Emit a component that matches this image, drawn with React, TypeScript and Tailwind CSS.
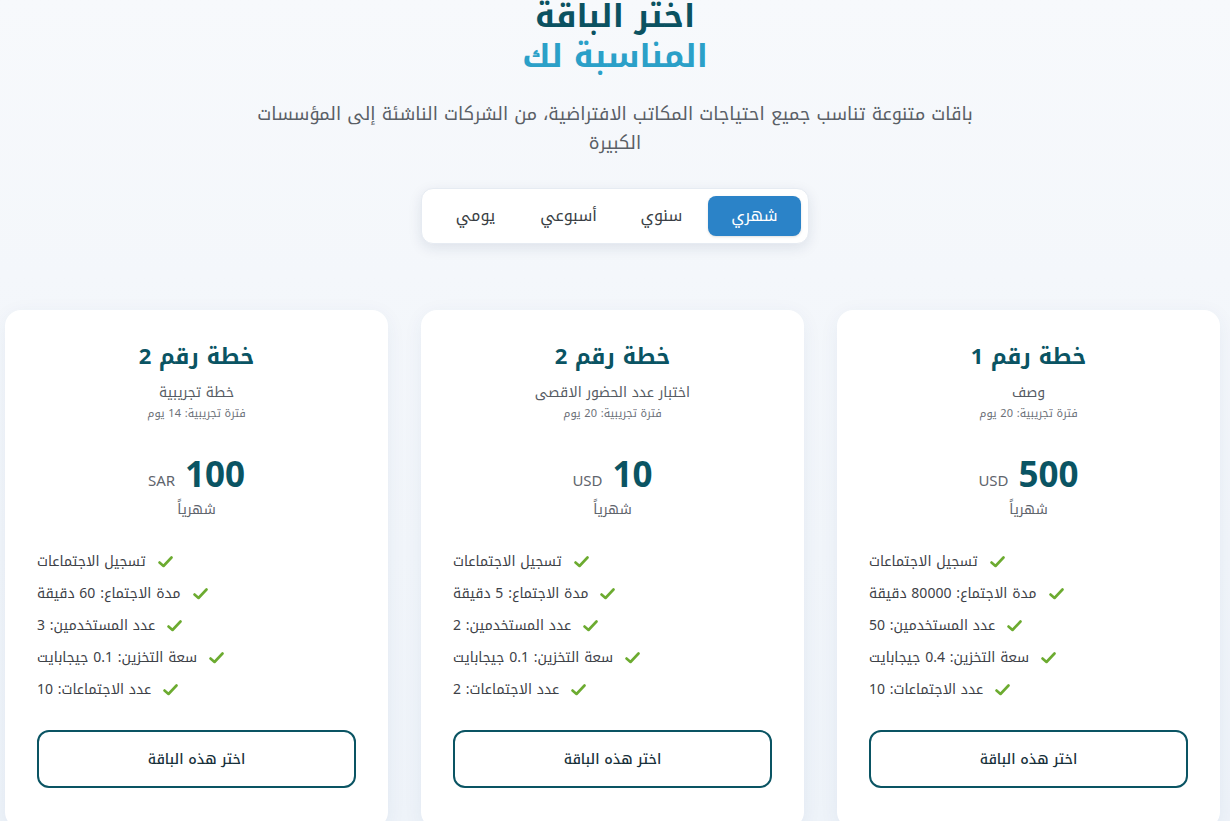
import React from "react";

const FONT = '"Noto Kufi Arabic", "Noto Sans Arabic", "Noto Sans", "DejaVu Sans", sans-serif';

type Plan = {
  title: string;
  desc: string;
  trial: string;
  price: string;
  currency: string;
  features: string[];
};

const plans: Plan[] = [
  {
    title: "خطة رقم 1",
    desc: "وصف",
    trial: "فترة تجريبية: 20 يوم",
    price: "500",
    currency: "USD",
    features: [
      "تسجيل الاجتماعات",
      "مدة الاجتماع: 80000 دقيقة",
      "عدد المستخدمين: 50",
      "سعة التخزين: 0.4 جيجابايت",
      "عدد الاجتماعات: 10",
    ],
  },
  {
    title: "خطة رقم 2",
    desc: "اختبار عدد الحضور الاقصى",
    trial: "فترة تجريبية: 20 يوم",
    price: "10",
    currency: "USD",
    features: [
      "تسجيل الاجتماعات",
      "مدة الاجتماع: 5 دقيقة",
      "عدد المستخدمين: 2",
      "سعة التخزين: 0.1 جيجابايت",
      "عدد الاجتماعات: 2",
    ],
  },
  {
    title: "خطة رقم 2",
    desc: "خطة تجريبية",
    trial: "فترة تجريبية: 14 يوم",
    price: "100",
    currency: "SAR",
    features: [
      "تسجيل الاجتماعات",
      "مدة الاجتماع: 60 دقيقة",
      "عدد المستخدمين: 3",
      "سعة التخزين: 0.1 جيجابايت",
      "عدد الاجتماعات: 10",
    ],
  },
];

function Check() {
  return (
    <svg width="15" height="12" viewBox="0 0 15 12" className="shrink-0">
      <polyline
        points="1.5,6.5 5.5,10 13.5,1.5"
        fill="none"
        stroke="#6cab30"
        strokeWidth="2.6"
        strokeLinecap="round"
        strokeLinejoin="round"
      />
    </svg>
  );
}

function Card({ plan }: { plan: Plan }) {
  return (
    <div className="bg-white rounded-[16px] shadow-[0_4px_20px_rgba(30,60,120,0.06)] px-[32px] pt-[32px] pb-[40px] flex flex-col items-center">
      <h3 className="text-[22px] leading-[30px] font-bold text-[#0a5463]">{plan.title}</h3>
      <p className="mt-[10px] text-[14px] leading-[22px] text-[#555b63]">{plan.desc}</p>
      <p className="text-[11px] leading-[20px] text-[#6b7078]">{plan.trial}</p>
      <div className="mt-[30px] flex items-end gap-[10px] h-[44px]">
        <span className="text-[35px] leading-[44px] font-bold text-[#0a5463]">{plan.price}</span>
        <span className="text-[15px] leading-[22px] mb-[6px] text-[#5f656d]">{plan.currency}</span>
      </div>
      <p className="text-[14px] leading-[24px] text-[#5f656d]">شهرياً</p>
      <ul className="mt-[29px] w-full flex flex-col items-end gap-[10px]">
        {plan.features.map((f, i) => (
          <li key={i} className="flex items-center gap-[12px] text-[14px] leading-[22px] text-[#3d4147]">
            <Check />
            <span>{f}</span>
          </li>
        ))}
      </ul>
      <button className="mt-[29px] w-full h-[58px] rounded-[12px] border-2 border-[#0a5463] text-[14px] font-medium text-[#17303a] bg-white">
        اختر هذه الباقة
      </button>
    </div>
  );
}

export default function App() {
  const tabs = ["شهري", "سنوي", "أسبوعي", "يومي"];
  return (
    <div
      dir="rtl"
      className="min-h-[821px] w-full overflow-hidden bg-gradient-to-b from-[#f7f9fc] to-[#eef3f9]"
      style={{ fontFamily: FONT }}
    >
      <div className="flex flex-col items-center">
        <h1 className="mt-[-3px] text-[32px] leading-[40px] font-bold text-[#0b5261] text-center">
          اختر الباقة
          <br />
          <span className="text-[#2ba0c8]">المناسبة لك</span>
        </h1>
        <p className="mt-[23px] text-[18px] leading-[29px] text-[#5a5f66] text-center">
          باقات متنوعة تناسب جميع احتياجات المكاتب الافتراضية، من الشركات الناشئة إلى المؤسسات
          <br />
          الكبيرة
        </p>
        <div className="mt-[30px] bg-white rounded-[12px] shadow-[0_4px_14px_rgba(20,40,80,0.10)] border border-[#e6ebf2] p-[7px] flex">
          {tabs.map((t, i) => (
            <div
              key={t}
              className={
                i === 0
                  ? "w-[93px] h-[40px] rounded-[8px] bg-[#2b83c8] text-white flex items-center justify-center text-[16px] shadow-sm"
                  : "w-[93px] h-[40px] rounded-[8px] text-[#3a3f45] flex items-center justify-center text-[16px]"
              }
            >
              {t}
            </div>
          ))}
        </div>
      </div>
      <div className="mt-[66px] mr-[10px] w-[1215px] grid grid-cols-3 gap-[33px]">
        {plans.map((p, i) => (
          <Card key={i} plan={p} />
        ))}
      </div>
    </div>
  );
}
